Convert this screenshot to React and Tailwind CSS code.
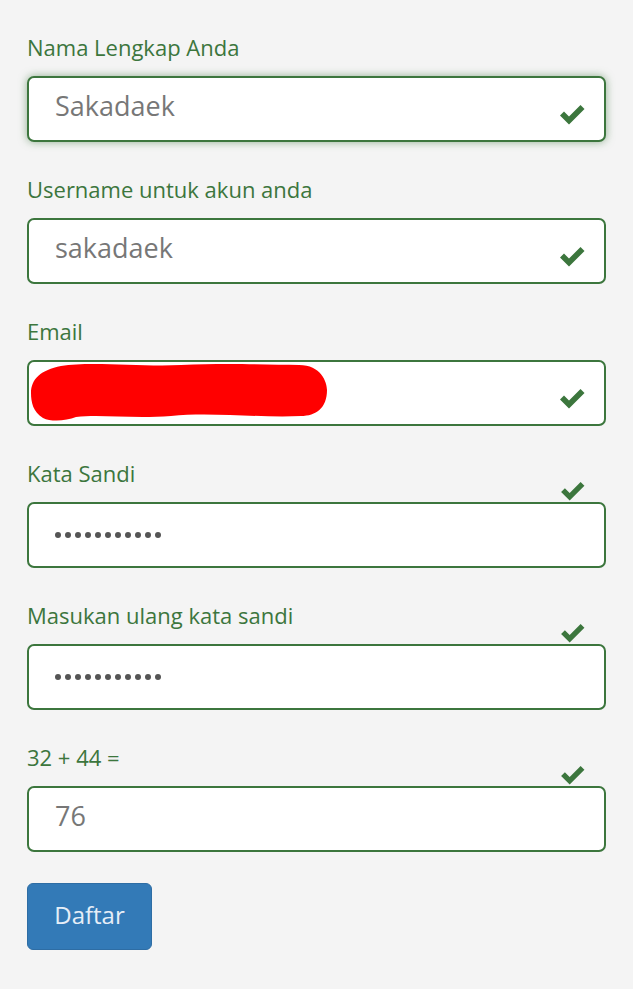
import React from "react";

const font = { fontFamily: '"Open Sans", "Lato", sans-serif' };

function Check({ className }) {
  return (
    <svg viewBox="0 0 25 21" className={className} fill="#3c763d">
      <polygon points="0,11.5 4,7.5 9,12.5 20.5,1 24.5,5 9,20.5" />
    </svg>
  );
}

function Field({ label, value, type, glow, checkOutside, children }) {
  return (
    <div className="relative flex flex-col">
      <label className="h-[30px] text-[22px] leading-[30px] text-[#3c763d]">{label}</label>
      <div
        className={`relative mt-[14px] h-[66px] rounded-[7px] border-2 border-[#3c763d] bg-white ${
          glow ? "shadow-[0_0_8px_rgba(60,118,61,0.55)]" : ""
        }`}
      >
        {type === "password" ? (
          <div className="flex h-full items-center gap-[4px] pl-[26px] pb-[1px]">
            {Array.from({ length: 11 }).map((_, i) => (
              <span key={i} className="h-[6px] w-[6px] rounded-full bg-[#555]" />
            ))}
          </div>
        ) : (
          <div className="flex h-full items-center pl-[26px] pb-[6px] text-[27px] text-[#777]">{value}</div>
        )}
        {children}
        {!checkOutside && <Check className="absolute right-[19px] top-[26px] h-[21px] w-[25px]" />}
      </div>
      {checkOutside && <Check className="absolute right-[21px] top-[23px] z-10 h-[20px] w-[24px]" />}
    </div>
  );
}

export default function App() {
  return (
    <div className="min-h-[989px] bg-[#f4f4f4] px-[27px] pt-[32px]" style={font}>
      <div className="flex w-[579px] flex-col gap-[32px]">
        <Field label="Nama Lengkap Anda" value="Sakadaek" glow />
        <Field label="Username untuk akun anda" value="sakadaek" />
        <Field label="Email" value="">
          <svg viewBox="0 0 296 60" className="absolute left-[2px] top-[0px] h-[60px] w-[296px]">
            <path
              fill="#ff0000"
              d="M30 4 C60 -1 110 5 150 3 C200 1 240 3 268 3 C290 3 296 20 296 28 C296 46 285 54 270 54 C230 56 180 50 140 54 C100 57 70 52 45 55 C35 59 20 60 12 56 C2 50 0 40 0 31 C0 17 10 8 30 4 Z"
            />
          </svg>
        </Field>
        <Field label="Kata Sandi" type="password" checkOutside />
        <Field label="Masukan ulang kata sandi" type="password" checkOutside />
        <Field label="32 + 44 =" value="76" checkOutside />
      </div>
      <button className="mt-[31px] flex h-[67px] w-[125px] items-center justify-center rounded-[6px] border border-[#2e6da4] bg-[#337ab7] pb-[4px] text-[24px] text-[#e6eef7]">
        Daftar
      </button>
    </div>
  );
}
